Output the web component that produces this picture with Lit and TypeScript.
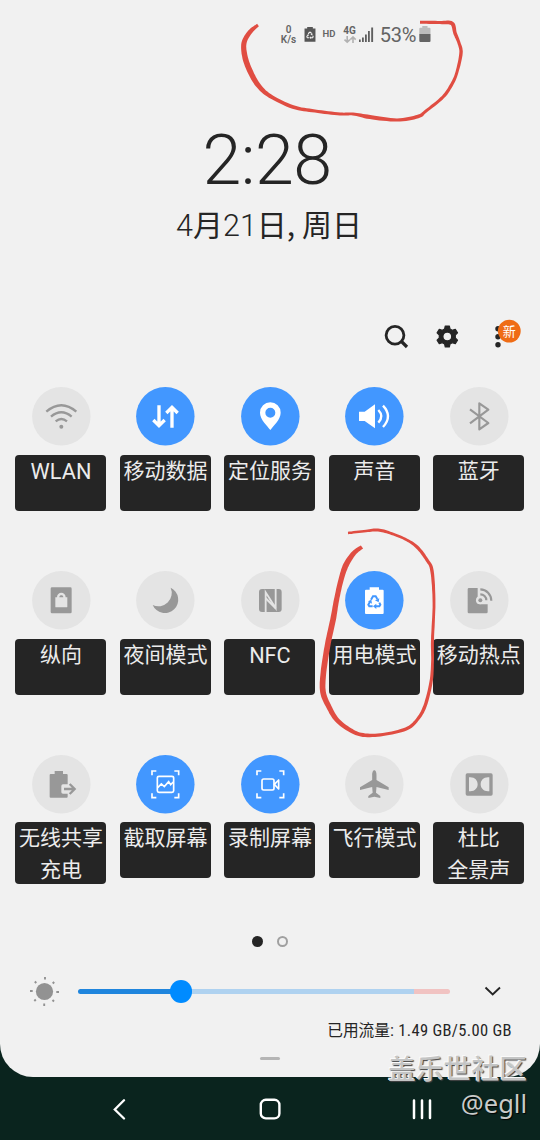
import { LitElement, html, svg, css } from "lit";
import { customElement, property } from "lit/decorators.js";

const BLUE = "#4297ff";
const PALE = "#e4e4e4";
const GREY = "#989898";

const recycle = (color: string) => svg`
  <g fill="none" stroke=${color} stroke-width="6">
    <path d="M-10 -3 L-4 -13 H4 L9 -5"/><path d="M15 6 L18 12 L15 17 H4"/><path d="M-5 17 H-15 L-18 12 L-13 3"/>
  </g>
  <g fill=${color}><path d="M15 -7 L13 5 L2 -1Z"/><path d="M6 9 V25 L-4 17Z"/><path d="M-19 2 L-9 -3 L-7 9Z"/></g>`;

const corners = svg`<path fill="none" stroke="#fff" stroke-width="5"
  d="M-40 -27V-40H-27 M27 -40H40V-27 M40 27V40H27 M-27 40H-40V27"/>`;

/* Glyphs are drawn around the origin; the disc has a radius of 88 units. */
const glyphs: Record<string, unknown> = {
  wifi: svg`<g fill="none" stroke=${GREY} stroke-width="7">
    <path d="M-45 -14Q0 -52 45 -14"/><path d="M-31 1Q0 -25 31 1"/><path d="M-17 15Q0 1 17 15"/></g>
    <circle cy="31" r="6" fill=${GREY} />`,
  data: svg`<g fill="none" stroke="#fff" stroke-width="10"><path d="M-19 -33V28M-36 11L-19 28L-2 11"/><path d="M20 34V-27M3 -10L20 -27L37 -10"/></g>`,
  location: svg`<path fill="#fff" fill-rule="evenodd" d="M0 41C-9 28-31 10-31-11A31 31 0 0 1 31-11C31 10 9 28 0 41ZM0-26A15 15 0 1 0 0 4A15 15 0 1 0 0-26Z"/>`,
  sound: svg`<path fill="#fff" d="M-46-14H-29L2-36V36L-29 14H-46Z"/><g fill="none" stroke="#fff" stroke-width="7">
    <path d="M12-19Q30 0 12 19"/><path d="M26-32Q56 0 26 32"/></g>`,
  bluetooth: svg`<path fill="none" stroke=${GREY} stroke-width="6.5" stroke-linejoin="round" d="M-28-21L27 20L0 39V-39L27-20L-28 21"/>`,
  portrait: svg`<rect x="-32" y="-39" width="63" height="78" rx="4" fill=${GREY} />
    <path fill=${PALE} d="M-18-9H-13C-13-27 13-27 13-9H18V19Q18 21 16 21H-16Q-18 21-18 19Z"/><path fill=${GREY} d="M-6-9C-6-17 6-17 6-9Z"/>`,
  moon: svg`<path fill=${GREY} d="M16-38A40 40 0 1 1-38 14A40 40 0 0 0 16-38Z"/>`,
  nfc: svg`<rect x="-34" y="-34" width="68" height="69" rx="9" fill=${GREY} />
    <path fill="none" stroke=${PALE} stroke-width="5.500" stroke-linejoin="miter" d="M-14 36V-24L16 23V-36"/>
    <path fill="none" stroke=${PALE} stroke-width="6" d="M-14-6L16 24"/>`,
  power: svg`<path fill="#fff" d="M-14-39H14V-32H25Q28-32 28-29V38Q28 41 25 41H-25Q-28 41-28 38V-29Q-28-32-25-32H-14Z"/>
    <g transform="translate(0 1)">${recycle(BLUE)}</g>`,
  hotspot: svg`<path fill=${GREY} d="M-31-37H-5V-9A12 12 0 0 0 2 12H25V35Q25 39 21 39H-31Q-35 39-35 35V-33Q-35-37-31-37Z"/>
    <circle cx="2" cy="0" r="12" fill=${PALE} /><circle cx="3" cy="0" r="6" fill=${GREY} />
    <g fill="none" stroke=${GREY} stroke-width="6.5"><path d="M3-18A18 18 0 0 1 21 0"/><path d="M3-33A33 34 0 0 1 36 1"/></g>`,
  share: svg`<path fill=${GREY} d="M-20-40H5V-31H16Q19-31 19-28V37Q19 40 16 40H-32Q-35 40-35 37V-28Q-35-31-32-31H-20Z"/>
    <path fill=${PALE} d="M5 0H22V28H5Q0 28 0 23V5Q0 0 5 0Z"/>
    <path fill="none" stroke=${GREY} stroke-width="7" d="M8 14H40M25-1L40 14L25 29"/>`,
  capture: svg`${corners}<rect x="-24" y="-24" width="49" height="48" rx="5" fill="none" stroke="#fff" stroke-width="5"/>
    <path fill="none" stroke="#fff" stroke-width="5" d="M-23 10L-12-1L-3 7L10-8L16 1L24-7"/>`,
  record: svg`${corners}<g fill="none" stroke="#fff" stroke-width="5" stroke-linejoin="round"><rect x="-25" y="-16" width="36" height="33" rx="5"/>
    <path d="M12 0L25-13V14Z"/></g>`,
  plane: svg`<path fill=${GREY} d="M0-42C5-42 6.500-34 6.500-27V-13L43 9V17L6.500 8L5 25L18 35V41L0 37L-18 41V35L-5 25L-6.500 8L-43 17V9L-6.500-13V-27C-6.500-34-5-42 0-42Z"/>`,
  dolby: svg`<rect x="-41" y="-33" width="81" height="67" rx="5" fill=${GREY} />
    <path fill=${PALE} d="M-31-21H-27C-13-21-5-11-5 0S-13 21-27 21H-31ZM30-21H26C12-21 4-11 4 0S12 21 26 21H30Z"/>`,
};

@customElement("quick-tile")
class QuickTile extends LitElement {
  @property() icon = "";
  @property({ type: Boolean }) on = false;
  @property({ attribute: false }) lines: string[] = [];

  static styles = css`
    :host { display: flex; flex-direction: column; align-items: center; }
    .disc { display: block; width: 58.67px; height: 58.67px; overflow: visible; }
    .label { box-sizing: border-box; width: 91px; min-height: 56px; margin-top: 9px; border-radius: 4px; padding-top: 1px;
      background: #252525; color: #ececec; text-align: center; white-space: nowrap;
      font: 400 21px/32px "Noto Sans CJK SC", sans-serif; overflow: hidden; }
    .line { height: 32px; line-height: 27px; }
    .line:last-child:not(:first-child) { height: 29px; }
    .line.latin { font-family: Roboto, sans-serif; font-size: 21.700px; line-height: 31px; }
  `;

  render() {
    return html`<svg class="disc" viewBox="-88 -88 176 176">
        <circle r="87.700" fill=${this.on ? BLUE : PALE} />${glyphs[this.icon]}
      </svg>
      <div class="label">${this.lines.map((l) => html`<div class=${/^[A-Z]+$/.test(l) ? "line latin" : "line"}>${l}</div>`)}</div>`;
  }
}

type Pt = [number, number, number];

/* Closed outline of a pen stroke whose width varies: each point is x, y, width. */
function ribbon(pts: Pt[]): string {
  const out: Pt[] = [];
  for (let i = 0; i < pts.length - 1; i++) {
    const a = pts[Math.max(0, i - 1)], b = pts[i], c = pts[i + 1], d = pts[Math.min(pts.length - 1, i + 2)];
    for (let k = 0; k < 8; k++) {
      const t = k / 8;
      out.push([0, 1, 2].map((n) => 0.5 * (2 * b[n] + (c[n] - a[n]) * t + (2 * a[n] - 5 * b[n] + 4 * c[n] - d[n]) * t * t
        + (3 * b[n] - a[n] - 3 * c[n] + d[n]) * t * t * t)) as Pt);
    }
  }
  out.push(pts[pts.length - 1]);
  const left: string[] = [], right: string[] = [];
  out.forEach((p, i) => {
    const q = out[Math.max(0, i - 1)], r = out[Math.min(out.length - 1, i + 1)];
    const dx = r[0] - q[0], dy = r[1] - q[1], len = Math.hypot(dx, dy) || 1;
    const nx = (-dy / len) * p[2] / 2, ny = (dx / len) * p[2] / 2;
    left.push(`${(p[0] + nx).toFixed(1)} ${(p[1] + ny).toFixed(1)}`);
    right.unshift(`${(p[0] - nx).toFixed(1)} ${(p[1] - ny).toFixed(1)}`);
  });
  return `M${left.join("L")}L${right.join("L")}Z`;
}

const statusLoop: Pt[] = [[258, 25, 3], [250, 32, 4.5], [244, 43, 5], [245, 57, 5.5], [250, 71, 5.5], [258, 85, 5], [270, 96, 4], [293, 107, 3.6], [315, 111, 3.2],
  [340, 114, 3], [353, 114, 3], [370, 117, 4.2], [397, 120, 3.2], [418, 116.5, 3.6], [426, 111, 3], [443, 97, 3.2], [452, 84, 3.2], [457, 72, 3], [461, 53, 3.4], [459, 43, 3.2], [455, 33, 3.6], [452, 23.500, 4], [440, 22.5, 3.2], [420, 22.3, 3]];
const powerLoop: Pt[] = [[362, 547, 3.8], [354, 553, 4.8], [346, 565, 5.7], [341, 580, 5.2], [336.5, 600, 5.2], [333, 620, 5.7], [328, 643, 5.7], [323.5, 672, 5.7], [323, 692, 5.7],
  [329, 707, 5.2], [337, 720, 4.8], [350, 730, 4.2], [363, 735, 3.8], [383, 734.5, 3], [406, 729, 3.4], [417, 720, 3.2], [425, 706, 3.4], [431, 682, 3.2], [432.5, 662, 2.8], [432.5, 640, 3], [434, 603, 2.8],
  [432, 571, 3.4], [427, 560, 3.2], [417, 547, 3.2], [405, 539, 2.6], [390, 533, 2.8], [378, 530, 3], [366, 531, 2.5], [348, 533, 2.5]];

const tiles: [string, boolean, string[]][] = [
  ["wifi", false, ["WLAN"]], ["data", true, ["移动数据"]], ["location", true, ["定位服务"]], ["sound", true, ["声音"]], ["bluetooth", false, ["蓝牙"]],
  ["portrait", false, ["纵向"]], ["moon", false, ["夜间模式"]], ["nfc", false, ["NFC"]], ["power", true, ["用电模式"]], ["hotspot", false, ["移动热点"]],
  ["share", false, ["无线共享", "充电"]], ["capture", true, ["截取屏幕"]], ["record", true, ["录制屏幕"]], ["plane", false, ["飞行模式"]], ["dolby", false, ["杜比", "全景声"]],
];

@customElement("app-root")
class AppRoot extends LitElement {
  static styles = css`
    :host { display: block; position: relative; width: 540px; height: 1140px; overflow: hidden; background: #0a241e;
      font-family: Roboto, "Noto Sans CJK SC", sans-serif; color: #252525; }
    svg { display: block; flex: none; }
    .sheet { box-sizing: border-box; height: 1077px; background: #f1f1f1; border-radius: 0 0 33px 33px; overflow: hidden; display: flex; flex-direction: column; }
    .status { box-sizing: border-box; height: 68px; flex: none; padding: 24px 0 0 280px; display: flex; align-items: flex-start; color: #646464; }
    .rate { width: 17px; margin-right: 7px; padding-top: 1px; font: 600 10px/10px Roboto, sans-serif; text-align: center; }
    .hd { width: 14px; margin: 4px 6.500px 0 6px; font: 600 9.5px/12px Roboto, sans-serif; text-align: center; }
    .net { width: 14px; margin-right: 2.500px; }
    .g { font: 700 10px/11px Roboto, sans-serif; height: 11px; padding-top: 1px; text-align: center; }
    .pct { width: 37px; margin: 0 2.500px 0 5.700px; font: 400 20px/23px Roboto, sans-serif; letter-spacing: -.2px; white-space: nowrap; }
    .cell { margin-top: 2px; }
    .time { flex: none; height: 131px; padding-top: 51px; box-sizing: border-box; font-weight: 300; font-size: 70px; line-height: 83px; text-align: center; text-indent: -6px; letter-spacing: -.6px; }
    .date { flex: none; height: 52px; font-family: "Noto Sans CJK SC", sans-serif; font-weight: 400; font-size: 30px; line-height: 49px; text-align: center; white-space: nowrap; text-indent: -2px; }
    .thin { font-family: Roboto, sans-serif; font-weight: 300; font-size: 30.500px; }
    .tools { flex: none; height: 136.3px; padding-top: 70px; box-sizing: border-box; display: flex; justify-content: flex-end; padding-right: 15px; }
    .bar { overflow: visible; }
    .tiles { flex: none; display: grid; grid-template-columns: repeat(5, 91px); column-gap: 13.48px; grid-auto-rows: 183.65px; padding: 0 15.49px; height: 534px; }
    .pager { flex: none; height: 39px; display: flex; align-items: center; justify-content: center; gap: 13.500px; padding: 1px 0 0 0; box-sizing: border-box; }
    .dot { box-sizing: border-box; width: 11px; height: 11px; border-radius: 50%; background: #252525; }
    .dot.off { background: none; border: 2px solid #a0a0a0; }
    .bright { flex: none; height: 62px; display: flex; align-items: center; padding-left: 29px; }
    .track { position: relative; width: 372px; height: 4.5px; margin: 0 34px 0 17.500px; border-radius: 3px; display: flex; }
    .fill { width: 103px; background: #1f85dd; border-radius: 3px 0 0 3px; }
    .rest { width: 233px; background: #afd2f0; }
    .hot { flex: 1; background: #f1c3c2; border-radius: 0 3px 3px 0; }
    .thumb { position: absolute; left: 92px; top: -9px; width: 22.6px; height: 22.6px; border-radius: 50%; background: #008bff; }
    .usage { flex: none; height: 33px; display: flex; justify-content: flex-end; padding-right: 28px; font-size: 15.7px; line-height: 18px; }
    .num { font-family: "Roboto Condensed", Roboto, sans-serif; font-size: 16.500px; letter-spacing: .32px; width: 122px; white-space: pre; }
    .grip { flex: none; width: 19.5px; height: 2.5px; border-radius: 2px; background: #b5b5b5; margin: 2px auto 0; }
    .nav { height: 63px; display: flex; align-items: center; padding-left: 112px; gap: 131.5px; }
    .ink { position: absolute; left: 0; top: 0; pointer-events: none; }
    .mark { position: absolute; right: 13px; bottom: 20px; text-align: right; color: #c9cbca; }
    .forum { font: 500 27.8px/36px "Noto Sans CJK SC", sans-serif; color: #c4c5c5; text-shadow: -1px -1px 0 #fafafa, 1px 1px 1px #444; white-space: nowrap; }
    .user { font: 400 25.5px/34px "Noto Sans", sans-serif; text-shadow: 1px 1px 1px #000; margin-top: 1px; }
  `;

  render() {
    return html`
      <div class="sheet">
        <div class="status">
          <div class="rate">0<br />K/s</div>
          <svg class="cell" width="12" height="17" viewBox="-34 -41 68 86"><path fill="#565656" d="M-16-41H16V-32H31V43H-31V-32H-16Z"/><g transform="translate(0 3)">${recycle("#f1f1f1")}</g></svg>
          <div class="hd">HD</div>
          <div class="net"><div class="g">4G</div>
            <svg width="14" height="8" viewBox="0 0 14 8"><path fill="none" stroke="#b2b2b2" stroke-width="1.6" d="M4.2 0V6M1.5 3.6L4.2 6.2L6.9 3.6M10 7V1M7.3 3.6L10 1L12.7 3.6"/></svg></div>
          <svg class="cell" width="15" height="17" viewBox="0 0 15 17"><path fill="#5f5f5f" d="M0 13.5h1.7V16H0zM3 11.5h1.8V16H3zM6 8.500h1.800V16H6zM9 5h1.800V16H9zM12.200 1.500h1.900V16h-1.900z"/></svg>
          <div class="pct">53%</div>
          <svg class="cell" width="12" height="17" viewBox="0 0 12 17"><path fill="#bcbcbc" d="M3.300 0H8.500V1.700H10.500Q11.500 1.700 11.500 2.700V8H.3V2.700Q.3 1.700 1.300 1.700H3.300Z"/><path fill="#646464" d="M.3 8H11.500V15Q11.500 16 10.500 16H1.300Q.3 16 .3 15Z"/></svg>
        </div>
        <div class="time">2:28</div>
        <div class="date"><span class="thin">4</span>月<span class="thin">21</span>日, 周日</div>
        <div class="tools">
          <svg class="bar" width="145" height="32" viewBox="380 320.500 145 32">
            <circle cx="395" cy="334.700" r="8.900" fill="none" stroke="#252525" stroke-width="2.800"/><path d="M401 340.500L407 346.500" stroke="#252525" stroke-width="3.200"/>
            <g transform="translate(447.300 336)"><path fill="#252525" fill-rule="evenodd" stroke="#252525" stroke-width="1.200" stroke-linejoin="round"
              d="M-2-10.500H2L2.700-7.500L5-6.300L8-7.200L10.200-3.700L8-1.500V1.500L10.200 3.700L8 7.200L5 6.300L2.700 7.500L2 10.500H-2L-2.700 7.500L-5 6.300L-8 7.200L-10.200 3.700L-8 1.500V-1.500L-10.200-3.700L-8-7.200L-5-6.300L-2.700-7.500ZM0-4.400A4.400 4.400 0 1 0 0 4.400A4.400 4.400 0 1 0 0-4.400Z"/></g>
            <g fill="#252525"><circle cx="498" cy="328.300" r="2.700"/><circle cx="498" cy="336.300" r="2.700"/><circle cx="498" cy="344.200" r="2.700"/></g>
            <circle cx="509.300" cy="330.600" r="11.400" fill="#ef6c15"/><text x="509.200" y="335.400" font-size="13" text-anchor="middle" fill="#fff">新</text>
          </svg>
        </div>
        <div class="tiles">${tiles.map(([icon, on, lines]) => html`<quick-tile .icon=${icon} .on=${on} .lines=${lines}></quick-tile>`)}</div>
        <div class="pager"><div class="dot"></div><div class="dot off"></div></div>
        <div class="bright">
          <svg width="31" height="31" viewBox="-15.500 -15.500 31 31"><circle r="8.600" fill="#929292"/>
            <path stroke="#929292" stroke-width="1.900" d="M.5-14.500V-12M-.3 12V14.500M-14.500-.5H-11.800M11.800.5H14.500M-9.700-10L-8.200-8.500M8.200-8L9.700-9.500M-10.200 9.500L-8.700 8M8 8.500L9.500 10"/></svg>
          <div class="track"><div class="fill"></div><div class="rest"></div><div class="hot"></div><div class="thumb"></div></div>
          <svg width="18" height="12" viewBox="0 0 18 12"><path fill="none" stroke="#252525" stroke-width="1.900" d="M1.500 2.500L8.700 9.500L16 2.500"/></svg>
        </div>
        <div class="usage"><span>已用流量</span><span class="num">: 1.49 GB/5.00 GB</span></div>
        <div class="grip"></div>
      </div>
      <div class="nav">
        <svg width="15" height="22" viewBox="0 0 15 22"><path fill="none" stroke="#fff" stroke-width="2.300" stroke-linecap="round" d="M12 2.300L2.800 11.500L12 20.500"/></svg>
        <svg width="22" height="22" viewBox="0 0 22 22"><rect x="1.800" y="1.800" width="18.600" height="18.600" rx="5" fill="none" stroke="#fff" stroke-width="2.400"/></svg>
        <svg width="22" height="22" viewBox="0 0 22 22"><path stroke="#fff" stroke-width="2.500" stroke-linecap="round" d="M2 2.500V20M10 2.500V20M18 2.500V20"/></svg>
      </div>
      <svg class="ink" width="540" height="1140"><path fill="#e04d42" d=${ribbon(statusLoop)} /><path fill="#e04d42" d=${ribbon(powerLoop)} /></svg>
      <div class="mark"><div class="forum">盖乐世社区</div><div class="user">@egll</div></div>
    `;
  }
}
